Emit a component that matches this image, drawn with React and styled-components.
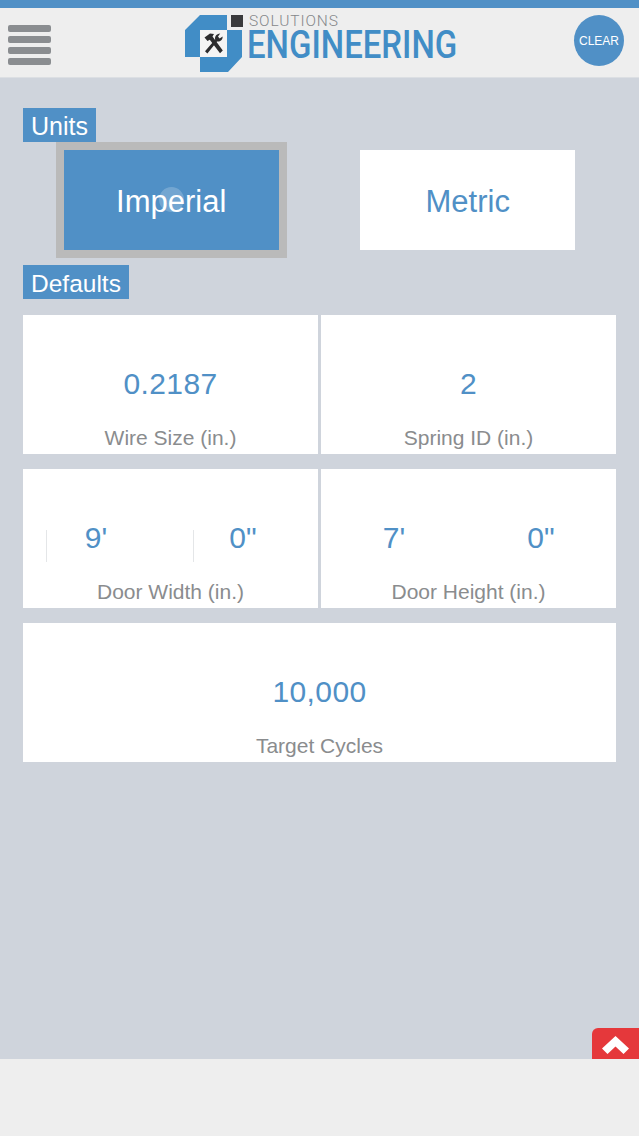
import React from "react";
import styled, { createGlobalStyle } from "styled-components";

const GlobalStyle = createGlobalStyle`
  html, body {
    margin: 0;
    padding: 0;
    background: #cfd4dc;
    font-family: "Liberation Sans", Arial, sans-serif;
  }
`;

function LogoMark() {
  return (
    <LogoSvg viewBox="0 0 58 57">
      <path fill="#418dc6" d="M15 0H42V15H15V42H0V15Z" />
      <path fill="#418dc6" d="M42 15H57V42L43 57H15V42H42Z" />
      <rect x="15" y="15" width="27" height="27" fill="#f4f4f4" />
      {/* hammer */}
      <path fill="#2c2c2e" d="M19.5 22.5L25 18.5L29 19L27.5 21.5L37.8 35.5L35 38.2L24.8 24.8L22.5 26Z" />
      {/* wrench */}
      <path fill="#2c2c2e" d="M20 36.2L30.2 24.6C29.4 22 31.4 18.8 35.2 18.6L33 21.6L34.6 23.6L37.6 21.4C37.8 25 34.8 27 32 26.4L22.4 38.4Z" />
    </LogoSvg>
  );
}

function Card({ label, split, children }) {
  return (
    <CardBox>
      <ValueRow $split={split}>{children}</ValueRow>
      <CardLabel>{label}</CardLabel>
    </CardBox>
  );
}

function App() {
  return (
    <Page>
      <GlobalStyle />
      <TopStripe />
      <Header>
        <Burger>
          <BurgerBar />
          <BurgerBar />
          <BurgerBar />
          <BurgerBar />
        </Burger>
        <Logo>
          <LogoMark />
          <LogoText>
            <LogoTop>
              <LogoSquare />
              <LogoSmall>SOLUTIONS</LogoSmall>
            </LogoTop>
            <LogoBig>ENGINEERING</LogoBig>
          </LogoText>
        </Logo>
        <ClearButton>CLEAR</ClearButton>
      </Header>

      <Main>
        <SectionTag>Units</SectionTag>
        <UnitRow>
          <UnitButton $active>
            Imperial
            <Ripple />
          </UnitButton>
          <UnitButton>Metric</UnitButton>
        </UnitRow>

        <DefaultsTag>Defaults</DefaultsTag>
        <CardGrid>
          <Card label="Wire Size (in.)">
            <Value>0.2187</Value>
          </Card>
          <Card label="Spring ID (in.)">
            <Value>2</Value>
          </Card>
          <Card label="Door Width (in.)" split>
            <FootField $divider>9'</FootField>
            <FootField $divider>0"</FootField>
          </Card>
          <Card label="Door Height (in.)" split>
            <FootField>7'</FootField>
            <FootField>0"</FootField>
          </Card>
          <WideCell>
            <Card label="Target Cycles">
              <Value>10,000</Value>
            </Card>
          </WideCell>
        </CardGrid>

        <ScrollTop aria-label="Scroll to top">
          <svg width="27" height="18" viewBox="0 0 27 18">
            <path fill="#fff" d="M13.5 0L27 12.5L21.5 18L13.5 10.5L5.5 18L0 12.5Z" />
          </svg>
        </ScrollTop>
      </Main>

      <Footer />
    </Page>
  );
}

export default App;

const Page = styled.div`
  display: flex;
  flex-direction: column;
  width: 639px;
  height: 1136px;
  overflow: hidden;
  background: #cfd4dc;
`;

const TopStripe = styled.div`
  height: 8px;
  background: #5090c6;
`;

const Header = styled.header`
  display: grid;
  grid-template-columns: 1fr auto 1fr;
  align-items: start;
  height: 69px;
  padding: 0 8px;
  background: #eeeeee;
  border-bottom: 1px solid #dcdfe3;
`;

const Burger = styled.div`
  display: flex;
  flex-direction: column;
  gap: 4px;
  width: 43px;
  margin-top: 17px;
`;

const BurgerBar = styled.span`
  height: 7px;
  border-radius: 2px;
  background: #8a8d90;
`;

const Logo = styled.div`
  display: flex;
  gap: 5px;
  width: 272px;
  margin: 7px 0 0 3px;
`;

const LogoSvg = styled.svg`
  flex: none;
  width: 58px;
  height: 57px;
`;

const LogoText = styled.div`
  display: flex;
  flex-direction: column;
  margin-left: -17px;
`;

const LogoTop = styled.div`
  display: flex;
  align-items: center;
  gap: 6px;
  height: 14px;
  margin-top: -1px;
`;

const LogoSquare = styled.span`
  width: 12px;
  height: 12px;
  background: #3a3a3c;
`;

const LogoSmall = styled.span`
  font-family: Roboto, sans-serif;
  font-weight: 300;
  font-size: 15.5px;
  line-height: 14px;
  letter-spacing: 0.9px;
  color: #85878a;
`;

const LogoBig = styled.div`
  width: 209px;
  margin: 2px 0 0 16px;
  font-family: Roboto, sans-serif;
  font-weight: 500;
  font-size: 38px;
  line-height: 30px;
  color: #418dc6;
  white-space: nowrap;
  transform: scaleX(0.867);
  transform-origin: left center;
`;

const ClearButton = styled.button`
  justify-self: end;
  width: 50px;
  height: 51px;
  margin: 7px 7px 0 0;
  padding: 0;
  border: none;
  border-radius: 50%;
  background: #5090c6;
  color: #fff;
  font-family: "Liberation Sans", Arial, sans-serif;
  font-size: 12px;
`;

const Main = styled.main`
  position: relative;
  flex: 1;
  padding: 30px 23px 0;
`;

const SectionTag = styled.div`
  width: fit-content;
  height: 34px;
  padding: 0 8px;
  background: #5090c6;
  color: #fff;
  font-size: 25px;
  line-height: 36px;
`;

const DefaultsTag = styled(SectionTag)`
  margin-top: 7px;
  font-size: 24.5px;
  line-height: 37px;
`;

const UnitRow = styled.div`
  display: grid;
  grid-template-columns: 296.5px 296.5px;
  justify-items: center;
`;

const UnitButton = styled.button`
  position: relative;
  box-sizing: border-box;
  width: 231px;
  height: 116px;
  padding: 3px 0 0;
  background-clip: padding-box;
  border: 8px solid ${(p) => (p.$active ? "#bababa" : "transparent")};
  background-color: ${(p) => (p.$active ? "#5090c6" : "#ffffff")};
  color: ${(p) => (p.$active ? "#ffffff" : "#5090c6")};
  font-family: "Liberation Sans", Arial, sans-serif;
  font-size: 31px;
`;

const Ripple = styled.span`
  position: absolute;
  left: 95px;
  top: 37px;
  width: 25px;
  height: 25px;
  border-radius: 50%;
  background: rgba(255, 255, 255, 0.2);
`;

const CardGrid = styled.div`
  display: grid;
  grid-template-columns: 295px 295px;
  column-gap: 3px;
  row-gap: 15px;
  margin-top: 16px;
`;

const WideCell = styled.div`
  grid-column: 1 / -1;
`;

const CardBox = styled.div`
  box-sizing: border-box;
  height: 139px;
  padding-top: 52px;
  background: #ffffff;
  text-align: center;
`;

const ValueRow = styled.div`
  display: flex;
  justify-content: ${(p) => (p.$split ? "flex-start" : "center")};
  gap: ${(p) => (p.$split ? "47px" : "0")};
  height: 34px;
  padding-left: ${(p) => (p.$split ? "23px" : "0")};
`;

const Value = styled.div`
  color: #5090c6;
  font-size: 30px;
  letter-spacing: 0.4px;
  line-height: 34px;
`;

const FootField = styled.div`
  position: relative;
  width: 100px;
  height: 34px;
  color: #5090c6;
  font-size: 30px;
  line-height: 34px;
  text-align: center;

  &::before {
    content: "";
    display: ${(p) => (p.$divider ? "block" : "none")};
    position: absolute;
    left: 0;
    top: 9px;
    width: 1px;
    height: 32px;
    background: #e4e6e8;
  }
`;

const CardLabel = styled.div`
  margin-top: 25px;
  color: #8a8c8e;
  font-size: 21px;
  line-height: 24px;
`;

const ScrollTop = styled.button`
  position: absolute;
  right: 0;
  bottom: 0;
  display: flex;
  align-items: center;
  justify-content: center;
  width: 47px;
  height: 31px;
  padding: 3px 0 0;
  border: none;
  border-radius: 6px 0 0 0;
  background: #e5383b;
`;

const Footer = styled.footer`
  height: 77px;
  background: #eeeeee;
`;
